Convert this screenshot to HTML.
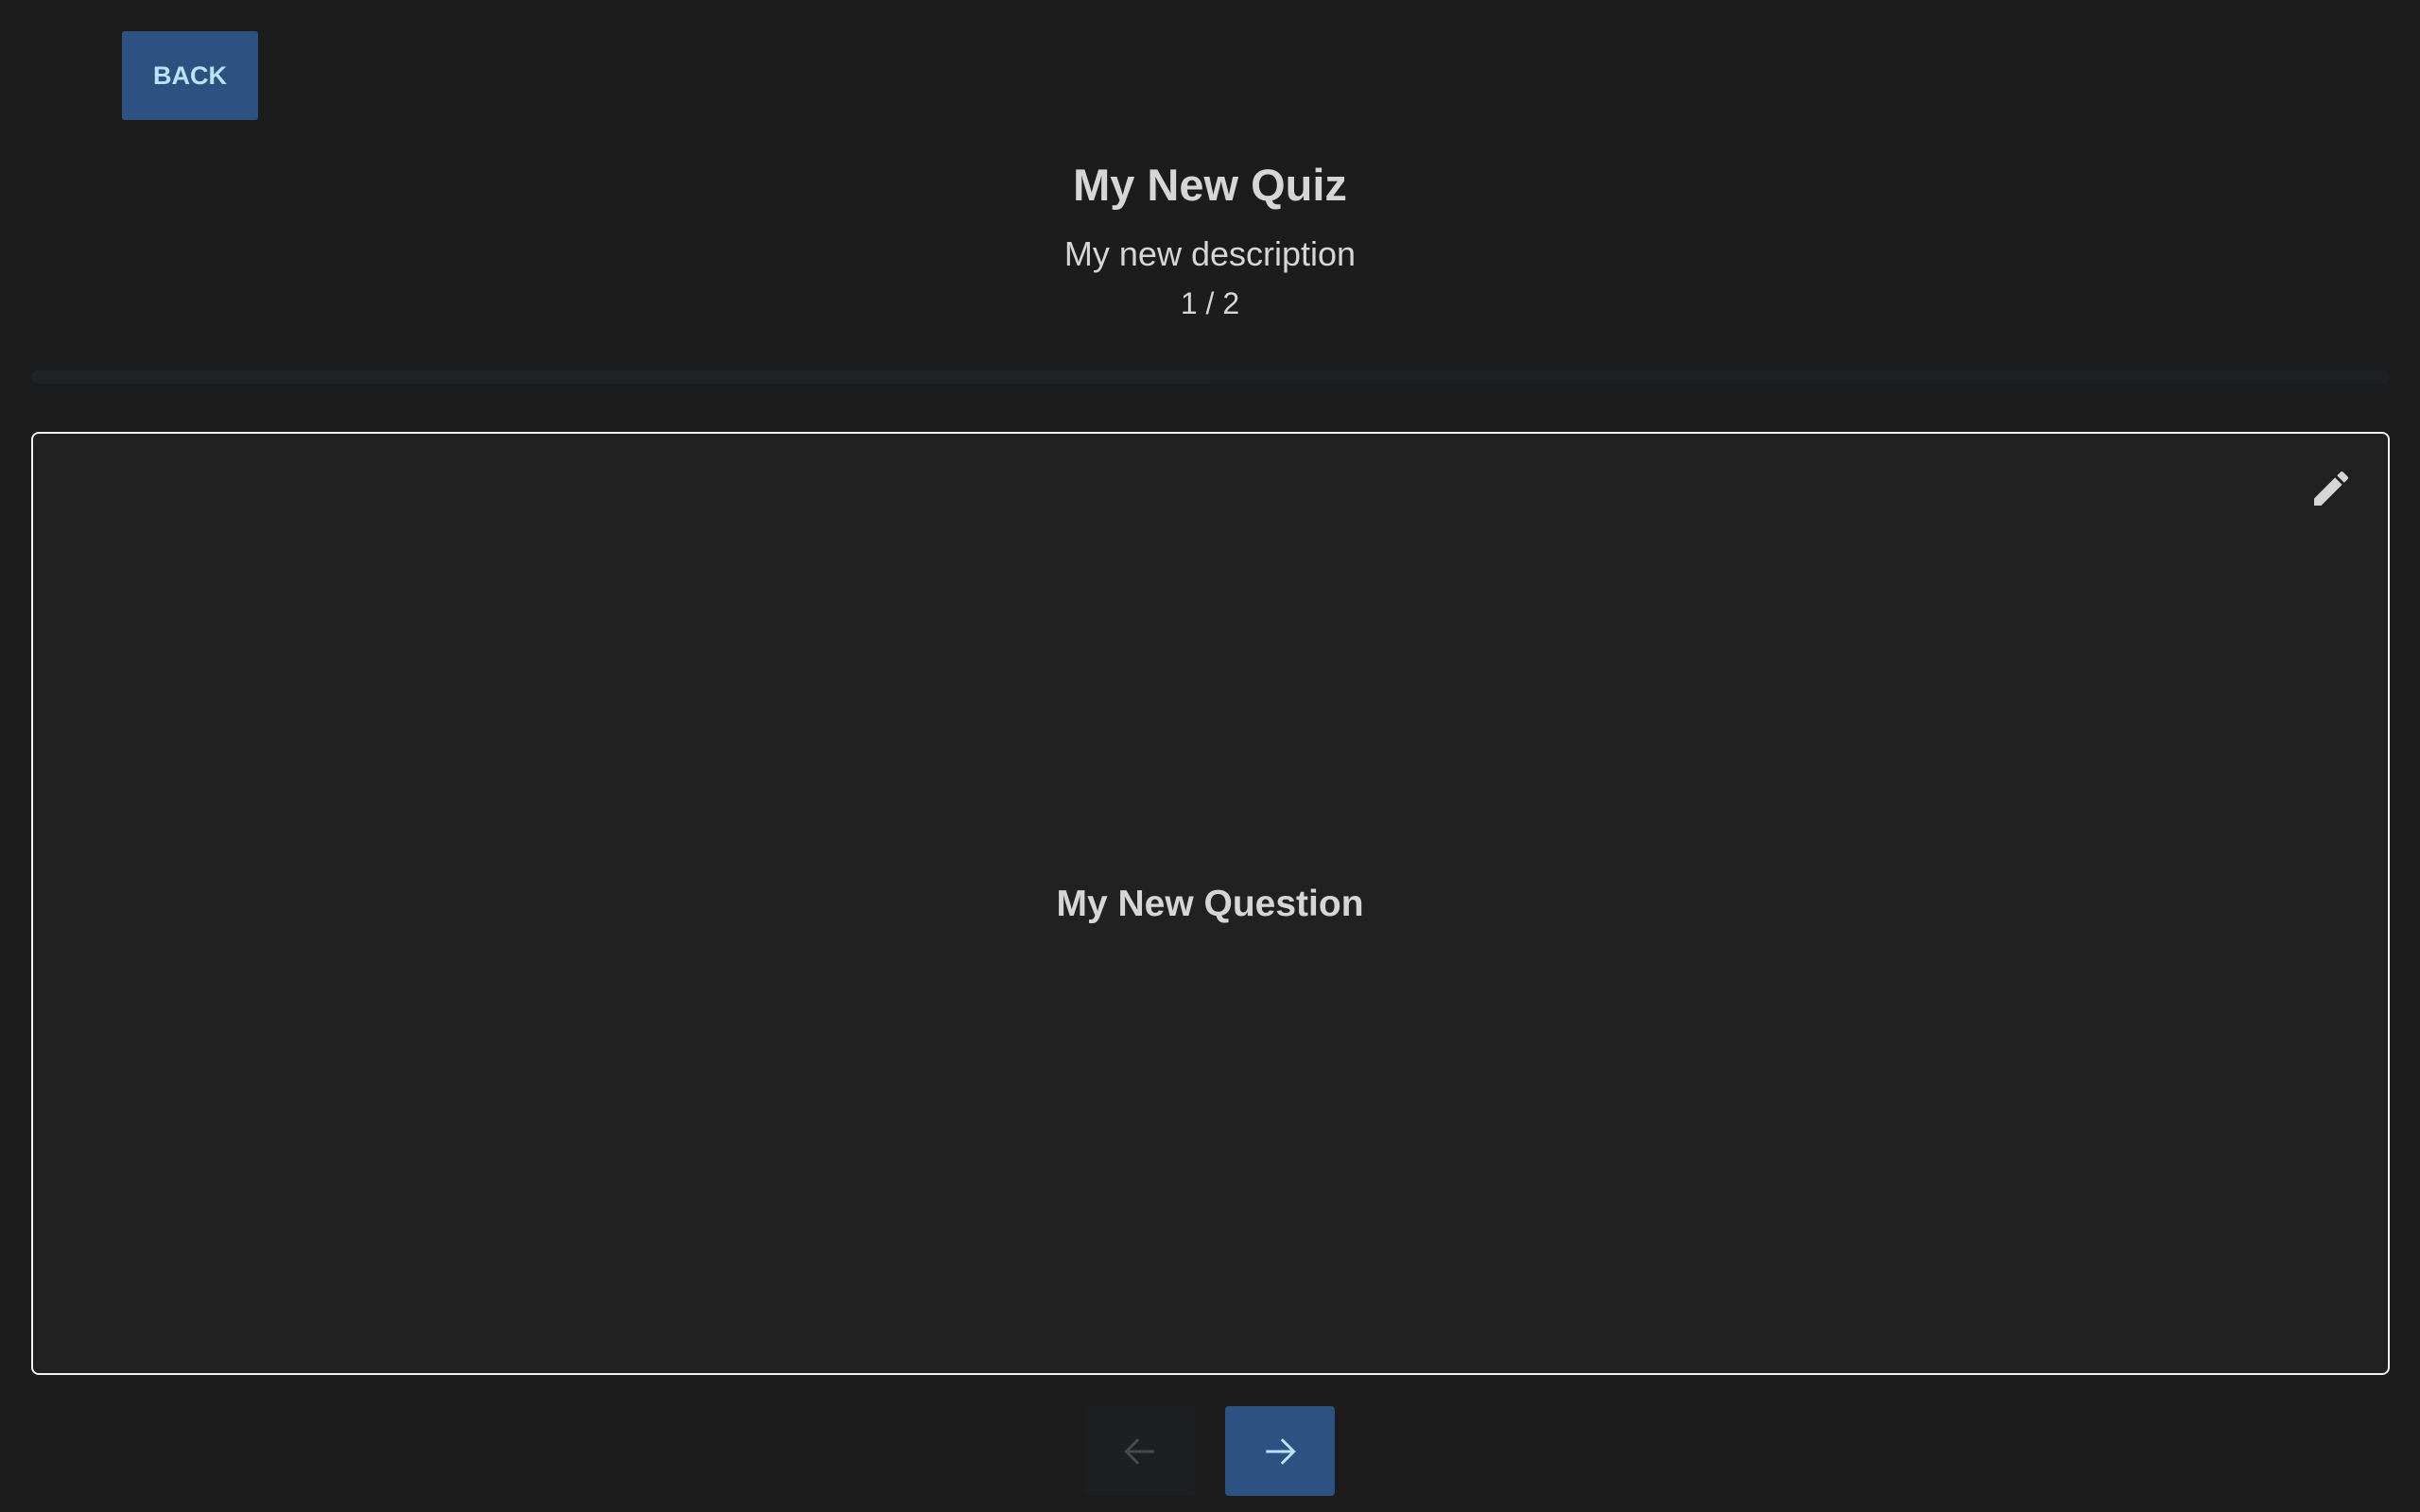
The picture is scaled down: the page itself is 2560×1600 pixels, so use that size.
<!DOCTYPE html>
<html><head><meta charset="utf-8"><style>
html,body{margin:0;padding:0;}
body{width:2560px;height:1600px;background:#1c1c1c;position:relative;overflow:hidden;font-family:"Liberation Sans",sans-serif;color:#d6d6d6;}
.back{position:absolute;left:129px;top:33px;width:144px;height:94px;background:#2c5282;border-radius:3px;color:#bee3f8;font-weight:bold;font-size:27px;display:flex;align-items:center;justify-content:center;}
.t{position:absolute;left:0;width:2560px;text-align:center;white-space:nowrap;}
.bar{position:absolute;left:33px;top:392px;width:2495px;height:14px;background:#1d2024;border-radius:7px;overflow:hidden;}
.bar div{width:1247px;height:100%;background:#1f2328;}
.card{position:absolute;left:33px;top:457px;width:2491px;height:994px;border:2px solid #f2f2f2;border-radius:8px;background:#212121;}
.nav{position:absolute;top:1488px;width:116px;height:95px;border-radius:4px;display:flex;align-items:center;justify-content:center;}
</style></head><body>
<div class="back">BACK</div>
<div class="t" style="top:166px;font-size:47px;font-weight:bold;line-height:60px;">My New Quiz</div>
<div class="t" style="top:247px;font-size:36px;line-height:44px;">My new description</div>
<div class="t" style="top:301px;font-size:32px;line-height:40px;">1 / 2</div>
<div class="bar"><div></div></div>
<div class="card">
<svg style="position:absolute;left:2407px;top:34px" width="48" height="48" viewBox="0 0 24 24"><path fill="#d6d6d6" d="M3 17.25V21h3.75L17.81 9.94l-3.75-3.75L3 17.25zM20.71 7.04a1 1 0 0 0 0-1.41l-2.34-2.34a1 1 0 0 0-1.41 0l-1.83 1.83 3.75 3.75 1.83-1.83z"/></svg>
</div>
<div class="t" style="top:933px;font-size:39px;font-weight:bold;line-height:48px;">My New Question</div>
<div class="nav" style="left:1148px;background:#1e1f21;">
<svg width="44" height="44" viewBox="0 0 24 24" fill="none" stroke="#4a4a4a" stroke-width="1.6"><path d="M20 12H4M11 5l-7 7 7 7"/></svg></div>
<div class="nav" style="left:1296px;background:#2c5282;">
<svg width="44" height="44" viewBox="0 0 24 24" fill="none" stroke="#bee3f8" stroke-width="1.6"><path d="M4 12h16M13 5l7 7-7 7"/></svg></div>
</body></html>
